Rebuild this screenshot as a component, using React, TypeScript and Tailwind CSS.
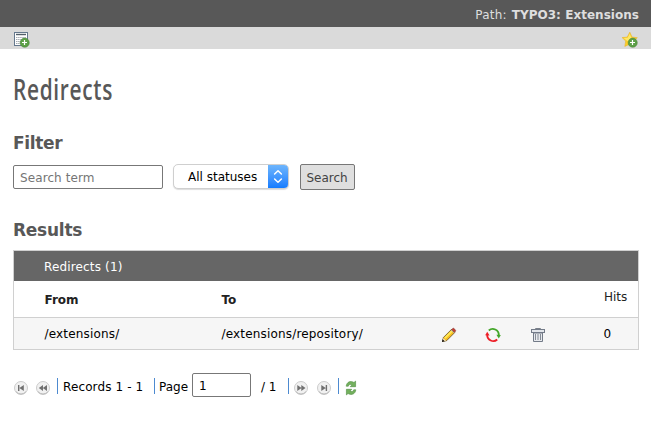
import type { ReactNode } from 'react';

function AddBadge() {
  return (
    <g>
      <circle cx="10.7" cy="10.7" r="4.6" fill="#5c9f47" stroke="#478536" strokeWidth=".5" />
      <path d="M10.5 8v5M8 10.5h5" stroke="#fff" strokeWidth="1.2" fill="none" />
    </g>
  );
}

function NewRecordIcon() {
  return (
    <svg className="block size-4" viewBox="0 0 16 16">
      <rect x=".5" y=".5" width="13" height="13" fill="#fff" stroke="#65788d" />
      <path d="M2 2.5h10" stroke="#535e68" strokeWidth="1.4" />
      <path d="M2 5.5h10M2 7.5h10M2 9.5h10M2 11.5h7" stroke="#8e969d" strokeWidth=".8" strokeDasharray="1.5 .6" />
      <AddBadge />
    </svg>
  );
}

function BookmarkIcon() {
  return (
    <svg className="block size-4" viewBox="0 0 16 16">
      <path d="m7.8.2 2.2 4.9 5.3.6-3.8 3.7.8 5.3-4.7-2.5-4.8 2.2.9-5.3L.1 5.6l5.2-.5z" fill="#fccd28" stroke="#e8b52c" strokeWidth=".6" />
      <path d="m7.8 1.8 1.5 4 4.2.5-3.2 2.3-5 .5-3.6-3 4-.3z" fill="#ffe765" />
      <AddBadge />
    </svg>
  );
}

function PencilIcon() {
  return (
    <svg className="block size-4" viewBox="0 0 16 16">
      <path d="m1.5 14.5.9-4L10.5 2.4l3.2 3.2-8.1 8.1z" fill="#f6bd20" stroke="#634a20" strokeWidth=".8" />
      <path d="m3.2 10.4 7.5-7.5 1.4 1.4-7.5 7.5z" fill="#ffe956" />
      <path d="m1.6 14.4.8-3.4 2.7 2.7z" fill="#f7e2b5" />
      <path d="m1 15 .6-2.7 2.1 2z" fill="#111" />
      <path d="m10.8 2.5 1.1-1.2c.6-.6 3.3 2 2.7 2.8l-1.1 1.2z" fill="#c93a30" stroke="#79332b" strokeWidth=".6" />
      <path d="m10 2.8 3.1 3.1" stroke="#b5afa8" strokeWidth="1" />
    </svg>
  );
}

function ResetIcon() {
  return (
    <svg className="block size-4" viewBox="0 0 16 16" fill="none">
      <path d="M3.8 3.5A6 6 0 0 1 13.8 8" stroke="#43a629" strokeWidth="1.9" />
      <path d="m11.4 7.8 4.4.2-2 3.4z" fill="#43a629" />
      <path d="M12.2 12.5A6 6 0 0 1 2.2 8" stroke="#ed1f27" strokeWidth="1.9" />
      <path d="m.2 8.2 2-3.4 2.4 3.6z" fill="#ed1f27" />
    </svg>
  );
}

function TrashIcon() {
  return (
    <svg className="block size-4" viewBox="0 0 16 16">
      <path d="M5.5 3V1.5h5V3" fill="none" stroke="#7a808a" />
      <rect x="1.5" y="2.5" width="13" height="3" fill="#e3e6eb" stroke="#737b88" />
      <path d="M3.5 6h9v8.5h-9z" fill="#e7e9ed" stroke="#737b88" />
      <path d="M5.5 7v6M8 7v6M10.5 7v6" stroke="#858c96" />
    </svg>
  );
}

function NavIcon({ children }: { children: ReactNode }) {
  return (
    <svg className="block size-4 shrink-0" viewBox="0 0 16 16">
      <circle cx="8" cy="8" r="6.5" fill="#f1f1f1" stroke="#c6c6c6" strokeWidth=".9" />
      <path d="M3 11.6a6.5 6.5 0 0 0 10 0" fill="none" stroke="#aaa" strokeWidth=".7" />
      <g fill="#707070">{children}</g>
    </svg>
  );
}

function RefreshIcon() {
  return (
    <svg className="block size-4 shrink-0" viewBox="0 0 16 16" stroke="#4d8c40" strokeWidth=".6" fill="#73b05d">
      <path d="M3.2 6.2C3.7 2 7.3.4 11 2.5l1.6-1.4v5.6H7.2l1.7-1.8C7 4 5.7 4.5 5.3 6.2z" />
      <path d="M12.8 9.8c-.5 4.2-4.1 5.8-7.8 3.7l-1.6 1.4V9.3h5.4l-1.7 1.8c1.9.9 3.2.4 3.6-1.3z" />
    </svg>
  );
}

function Divider() {
  return <span className="mt-[5px] h-4 w-px shrink-0 bg-[#4d8ad0]" />;
}

export default function App() {
  return (
    <div className="h-[422px] w-[651px] overflow-hidden bg-white font-['Verdana','DejaVu_Sans',sans-serif] text-[12px] leading-4 text-black">
      <header className="flex h-[27px] items-center justify-end bg-[#585858] pt-[2px] pr-[12px] text-[#dedede]">
        <span className="mr-[5px] tracking-[0.2px]">Path:</span>
        <b className="tracking-[0.03px]">TYPO3: Extensions</b>
      </header>
      <div className="flex h-[22px] justify-between bg-[#dadada] pt-[5px] pr-[13px] pl-[14px]">
        <NewRecordIcon />
        <BookmarkIcon />
      </div>
      <main className="pr-3 pl-[13px]">
        <h1 className="mt-[22px] h-9 w-fit origin-left scale-x-[0.745] font-['Open_Sans',sans-serif] text-[28px] leading-9 font-semibold tracking-[0.9px] whitespace-nowrap text-[#585858]">Redirects</h1>
        <h2 className="mt-[25px] h-[22px] text-[17px] leading-[22px] font-bold tracking-[-0.35px] text-[#585858]">Filter</h2>
        <div className="mt-[10px] flex h-[26px]">
          <input className="mt-px h-6 w-[150px] rounded-[2px] border border-[#777] px-[6px] pt-px tracking-[0.1px] placeholder:text-[#757575]" placeholder="Search term" />
          <button className="ml-[10px] flex h-[25px] w-[116px] items-center overflow-hidden rounded-[5px] border border-[#cfcfcf] bg-white shadow-[0_1px_1px_#ddd]">
            <span className="w-[94px] pl-[14px] text-left">All statuses</span>
            <span className="flex h-full flex-1 items-center justify-center bg-linear-to-b from-[#6db5fc] to-[#127cff]">
              <svg className="h-[15px] w-[10px]" viewBox="0 0 10 15" fill="none" stroke="white" strokeWidth="1.5" strokeLinecap="round" strokeLinejoin="round">
                <path d="m1.6 5 3.4-3.3L8.4 5M1.6 10 5 13.3 8.4 10" />
              </svg>
            </span>
          </button>
          <button className="ml-[11px] h-[26px] w-[55px] rounded-[2px] border border-[#777] bg-[#dfdfdf] pt-px pr-px text-[#434343]">Search</button>
        </div>
        <h2 className="mt-[29px] h-[22px] text-[17px] leading-[22px] font-bold tracking-[-0.25px] text-[#585858]">Results</h2>
        <section className="mt-[9px] h-[100px] border border-[#d0d0d0]">
          <div className="flex h-[30px] items-center bg-[#666] pt-px pl-[30px] tracking-[0.15px] text-white">Redirects (1)</div>
          <div className="grid h-[37px] grid-cols-[177px_382px_1fr] border-b border-[#d0d0d0] pl-[30.5px] text-[#222]">
            <b className="pt-[11px]">From</b>
            <b className="pt-[11px]">To</b>
            <span className="pt-[8px] pl-[0.5px]">Hits</span>
          </div>
          <div className="grid h-[31px] grid-cols-[177px_219px_44px_45px_74px_1fr] items-center bg-[#f6f6f6] pt-px pl-[30.5px] tracking-[0.17px]">
            <span>/extensions/</span>
            <span>/extensions/repository/</span>
            <span className="pt-px"><PencilIcon /></span>
            <span className="pt-px"><ResetIcon /></span>
            <span className="pt-px"><TrashIcon /></span>
            <span>0</span>
          </div>
        </section>
        <nav className="mt-[23px] flex h-6">
          <span className="mt-[7px] flex gap-[6px]">
            <NavIcon><path d="M5 5h1.4v6H5zM10.8 5v6L6.4 8z" /></NavIcon>
            <NavIcon><path d="M8 5v6L3.8 8zM12 5v6L7.8 8z" /></NavIcon>
          </span>
          <span className="w-[6px]" />
          <Divider />
          <span className="mt-[6px] ml-[5px] w-[91px] tracking-[0.12px] whitespace-nowrap">Records 1 - 1</span>
          <Divider />
          <span className="mt-[6px] ml-1 w-[33px]">Page</span>
          <input className="h-6 w-[59px] rounded-[2px] border border-[#777] px-[6px] pt-px" defaultValue="1" />
          <span className="mt-[6px] ml-[10px] w-[27px] whitespace-nowrap">/ 1</span>
          <Divider />
          <span className="mt-[7px] ml-1 flex gap-[7px]">
            <NavIcon><path d="M4.3 5v6l4.2-3zM8.3 5v6l4.2-3z" /></NavIcon>
            <NavIcon><path d="M5.3 5v6l4.4-3zM9.7 5h1.4v6H9.7z" /></NavIcon>
          </span>
          <span className="w-[6px]" />
          <Divider />
          <span className="mt-[7px] ml-[4px]"><RefreshIcon /></span>
        </nav>
      </main>
    </div>
  );
}
